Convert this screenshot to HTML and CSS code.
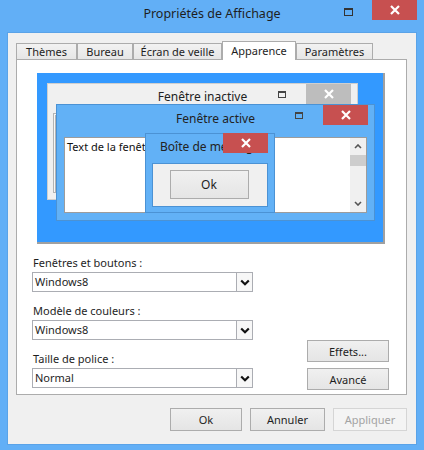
FILE: index.html
```html
<!DOCTYPE html>
<html lang="fr">
<head>
<meta charset="utf-8">
<title>Propriétés de Affichage</title>
<link rel="stylesheet" href="styles.css">
</head>
<body>
<div class="window">
  <div class="titlebar">
    <div class="title">Propriétés de Affichage</div>
    <div class="controls">
      <span class="max-icon"></span>
      <span class="close-btn"><svg width="10" height="10" viewBox="0 0 10 10"><path d="M1 1L9 9M9 1L1 9" stroke="#fff" stroke-width="2.2"/></svg></span>
    </div>
  </div>
  <div class="client">
    <div class="tabs">
      <div class="tab t1">Thèmes</div>
      <div class="tab t2">Bureau</div>
      <div class="tab t3">Écran de veille</div>
      <div class="tab t4 active">Apparence</div>
      <div class="tab t5">Paramètres</div>
    </div>
    <div class="panel">
      <div class="preview">
        <div class="pwin inactive">
          <div class="pw-titlebar">
            <div class="pw-title">Fenêtre inactive</div>
            <div class="pw-controls">
              <span class="mini-max dark"></span>
              <span class="mini-close grey"><svg width="10" height="10" viewBox="0 0 10 10"><path d="M1 1L9 9M9 1L1 9" stroke="#fff" stroke-width="2.2"/></svg></span>
            </div>
          </div>
          <div class="inactive-body"><div class="inactive-inner"></div></div>
        </div>
        <div class="pwin active-win">
          <div class="pw-titlebar">
            <div class="pw-title">Fenêtre active</div>
            <div class="pw-controls">
              <span class="mini-max dark"></span>
              <span class="mini-close red"><svg width="10" height="10" viewBox="0 0 10 10"><path d="M1 1L9 9M9 1L1 9" stroke="#fff" stroke-width="2.2"/></svg></span>
            </div>
          </div>
          <div class="textarea">
            <div class="ta-text">Text de la fenêtre</div>
            <div class="scrollbar">
              <div class="sb-btn"><svg width="8" height="5" viewBox="0 0 8 5"><path d="M1 4L4 1L7 4" fill="none" stroke="#555" stroke-width="1.6"/></svg></div>
              <div class="sb-thumb"></div>
              <div class="sb-track"></div>
              <div class="sb-btn"><svg width="8" height="5" viewBox="0 0 8 5"><path d="M1 1L4 4L7 1" fill="none" stroke="#555" stroke-width="1.6"/></svg></div>
            </div>
          </div>
        </div>
        <div class="msgbox">
          <div class="mb-titlebar">
            <span class="mb-title">Boîte de message</span>
            <span class="mini-close red mb-close"><svg width="10" height="10" viewBox="0 0 10 10"><path d="M1 1L9 9M9 1L1 9" stroke="#fff" stroke-width="2.2"/></svg></span>
          </div>
          <div class="mb-body"><div class="btn mb-ok">Ok</div></div>
        </div>
      </div>
      <div class="form">
        <div class="fields">
          <div class="field">
            <div class="label">Fenêtres et boutons :</div>
            <div class="select"><span class="val">Windows8</span><span class="arrow"><svg width="10" height="7" viewBox="0 0 10 7"><path d="M1.2 1.5L5 5.2L8.8 1.5" fill="none" stroke="#111" stroke-width="2.2"/></svg></span></div>
          </div>
          <div class="field">
            <div class="label">Modèle de couleurs :</div>
            <div class="select"><span class="val">Windows8</span><span class="arrow"><svg width="10" height="7" viewBox="0 0 10 7"><path d="M1.2 1.5L5 5.2L8.8 1.5" fill="none" stroke="#111" stroke-width="2.2"/></svg></span></div>
          </div>
          <div class="field">
            <div class="label">Taille de police :</div>
            <div class="select"><span class="val">Normal</span><span class="arrow"><svg width="10" height="7" viewBox="0 0 10 7"><path d="M1.2 1.5L5 5.2L8.8 1.5" fill="none" stroke="#111" stroke-width="2.2"/></svg></span></div>
          </div>
        </div>
        <div class="side-buttons">
          <div class="btn side">Effets...</div>
          <div class="btn side">Avancé</div>
        </div>
      </div>
    </div>
    <div class="actions">
      <div class="btn b-ok">Ok</div>
      <div class="btn b-cancel">Annuler</div>
      <div class="btn b-apply disabled">Appliquer</div>
    </div>
  </div>
</div>
</body>
</html>
```
FILE: styles.css
```css
* { box-sizing: border-box; }
body {
  margin: 0;
  font-family: "Noto Sans", "Open Sans", sans-serif;
  font-size: 11px;
  color: #1e1e1e;
}
.window {
  width: 424px;
  height: 450px;
  background: #62aff6;
  display: flex;
  flex-direction: column;
}
.titlebar {
  height: 32px;
  display: grid;
  grid-template-columns: 1fr auto 1fr;
}
.title {
  grid-column: 2;
  font-size: 12.5px;
  line-height: 18px;
  padding-top: 5px;
  color: #1e1e1e;
  white-space: nowrap;
}
.controls {
  grid-column: 3;
  display: flex;
  justify-content: flex-end;
  align-items: flex-start;
  padding-right: 7px;
}
.max-icon {
  width: 9px;
  height: 8px;
  border: 1px solid #333;
  border-top-width: 2px;
  margin-top: 8px;
  margin-right: 19px;
}
.close-btn {
  width: 45px;
  height: 20px;
  background: #c75050;
  display: flex;
  align-items: center;
  justify-content: center;
}
.client {
  margin: 0 7px;
  height: 413px;
  background: #f0f0f0;
  border: 1px solid #5aa3e8;
  padding: 8px 9px 0 8px;
}
.tabs {
  display: flex;
  align-items: flex-end;
  height: 18px;
}
.tab {
  height: 16px;
  border: 1px solid #acacac;
  border-bottom: 0;
  background: linear-gradient(#f2f2f2, #e6e6e6);
  text-align: center;
  line-height: 15px;
  white-space: nowrap;
}
.t1 { width: 61px; }
.t2 { width: 56px; }
.t3 { width: 89px; }
.t4 { width: 74px; }
.t5 { width: 77px; }
.tab.active {
  height: 19px;
  background: #fff;
  margin-bottom: -1px;
  position: relative;
  z-index: 1;
  line-height: 17px;
}
.panel {
  width: 391px;
  height: 336px;
  border: 1px solid #acacac;
  background: #fff;
  padding: 13px 0 0 20px;
}
.preview {
  position: relative;
  width: 348px;
  height: 171px;
  background: #3399ff;
  border-right: 2px solid #a0a0a0;
  border-bottom: 2px solid #a0a0a0;
  font-size: 12px;
  color: #222;
}
.pwin {
  position: absolute;
  display: flex;
  flex-direction: column;
}
.inactive {
  left: 10px;
  top: 10px;
  width: 311px;
  height: 117px;
  background: #f0f0f0;
  border: 1px solid #cfcfcf;
}
.active-win {
  left: 19px;
  top: 31px;
  width: 319px;
  height: 117px;
  background: #62b1f6;
  border: 1px solid #4b92d4;
}
.pw-titlebar {
  display: grid;
  grid-template-columns: 1fr auto 1fr;
  height: 29px;
}
.pw-title {
  grid-column: 2;
  white-space: nowrap;
  line-height: 17px;
  padding-top: 4px;
}
.active-win .pw-title { padding-top: 5px; }
.pw-controls {
  grid-column: 3;
  display: flex;
  justify-content: flex-end;
  align-items: flex-start;
  padding-right: 6px;
}
.mini-max {
  width: 8px;
  height: 7px;
  border: 1px solid #444;
  border-top-width: 2px;
  margin-top: 7px;
  margin-right: 20px;
}
.mini-close {
  width: 45px;
  height: 20px;
  display: flex;
  align-items: center;
  justify-content: center;
}
.mini-close.grey { background: #bdbdbd; }
.mini-close.red { background: #c75050; }
.inactive-body {
  margin: 0 0 6px 5px;
  flex: 1;
  border: 1px solid #b4b4b4;
  padding: 1px 0 0 1px;
  background: #f7f7f7;
}
.inactive-inner {
  height: 100%;
  border-left: 1px solid #b4b4b4;
  border-top: 1px solid #b4b4b4;
  background: #fff;
}
.textarea {
  margin: 3px 0 0 7px;
  width: 303px;
  height: 76px;
  border: 1px solid #9c9c9c;
  background: #fff;
  display: flex;
  font-size: 11px;
  color: #111;
}
.ta-text {
  flex: 1;
  padding: 1px 0 0 2px;
  line-height: 16px;
  white-space: nowrap;
  overflow: hidden;
}
.scrollbar {
  width: 16px;
  background: #f0f0f0;
  display: flex;
  flex-direction: column;
}
.sb-btn {
  height: 17px;
  display: flex;
  align-items: center;
  justify-content: center;
}
.sb-thumb {
  height: 11px;
  background: #cdcdcd;
}
.sb-track { flex: 1; }
.msgbox {
  position: absolute;
  left: 108px;
  top: 60px;
  width: 130px;
  height: 80px;
  background: #62b1f6;
  border: 1px solid #4b92d4;
  display: flex;
  flex-direction: column;
}
.mb-titlebar {
  position: relative;
  height: 29px;
}
.mb-title {
  display: block;
  padding: 4px 0 0 14px;
  line-height: 17px;
  white-space: nowrap;
}
.mb-close {
  position: absolute;
  left: 77px;
  top: -1px;
}
.mb-body {
  margin: 0 6px;
  height: 44px;
  background: #f0f0f0;
  border: 1px solid #4b92d4;
  padding-top: 6px;
}
.btn {
  border: 1px solid #acacac;
  background: linear-gradient(#f0f0f0, #e5e5e5);
  display: flex;
  align-items: center;
  justify-content: center;
  font-size: 11px;
  color: #1e1e1e;
  white-space: nowrap;
}
.mb-ok {
  width: 79px;
  height: 29px;
  margin: 0 auto;
  position: relative;
  left: -1px;
  font-size: 12px;
}
.form {
  display: flex;
  margin-top: 11px;
  margin-left: -5px;
}
.fields {
  display: flex;
  flex-direction: column;
  gap: 11px;
}
.label {
  line-height: 16px;
  padding-left: 1px;
  margin-bottom: 1px;
}
.select {
  display: flex;
  width: 221px;
  height: 20px;
  border: 1px solid #abadb3;
  background: #fff;
}
.val {
  flex: 1;
  padding-left: 2px;
  line-height: 18px;
}
.arrow {
  width: 16px;
  border-left: 1px solid #abadb3;
  background: #f7f7f7;
  display: flex;
  align-items: center;
  justify-content: center;
}
.side-buttons {
  margin-left: auto;
  margin-right: 17px;
  align-self: flex-end;
  display: flex;
  flex-direction: column;
  gap: 6px;
  margin-bottom: -2px;
}
.btn.side {
  width: 82px;
  height: 22px;
}
.actions {
  display: flex;
  justify-content: flex-end;
  gap: 8px;
  margin-top: 13px;
}
.actions .btn { height: 23px; }
.b-ok { width: 72px; }
.b-cancel { width: 75px; }
.b-apply { width: 74px; }
.btn.disabled {
  border-color: #d5d5d5;
  background: #f4f4f4;
  color: #a3a3a3;
}
```
